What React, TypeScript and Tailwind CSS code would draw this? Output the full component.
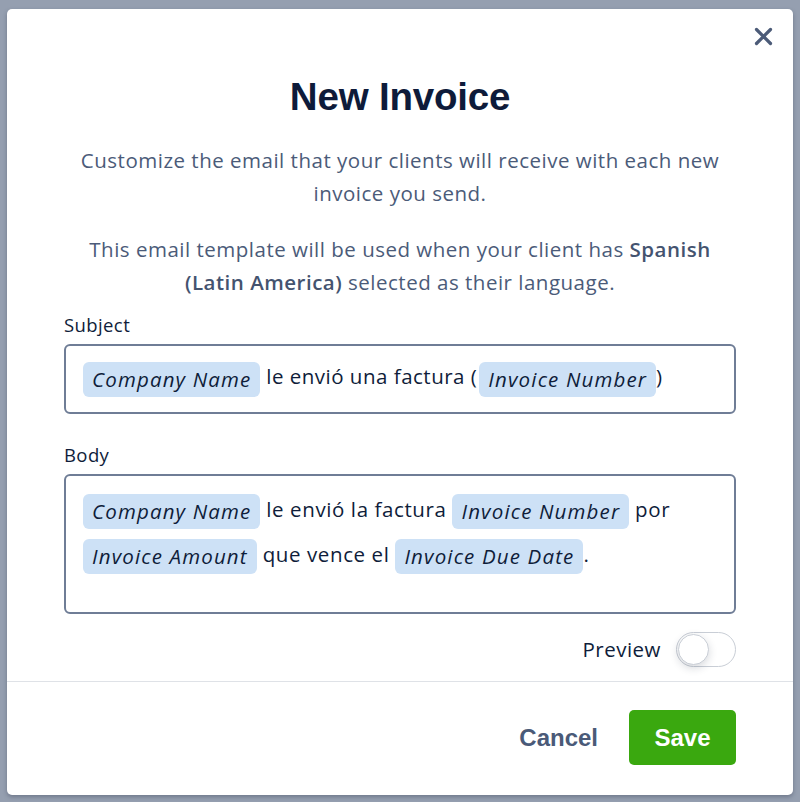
import { useState } from "react";

const body = { fontFamily: '"Open Sans", "Noto Sans", sans-serif' };
const heading = { fontFamily: '"Liberation Sans", Arial, sans-serif' };

function Token({ label }: { label: string }) {
  return (
    <span className="inline-block h-[35px] rounded-[6px] bg-[#cde1f6] px-[9px] align-middle italic leading-[35px] tracking-[1.15px] text-[#0f1d3a]">
      {label}
    </span>
  );
}

function Toggle({ on, onChange }: { on: boolean; onChange: () => void }) {
  return (
    <button
      type="button"
      onClick={onChange}
      className={`relative h-[35px] w-[60px] rounded-full border border-[#c9ced6] transition-colors ${
        on ? "bg-[#3aa50f]" : "bg-white"
      }`}
    >
      <span
        className={`absolute top-[1px] h-[31px] w-[31px] rounded-full border border-[#c9ced6] bg-white shadow-[0_3px_8px_rgba(30,40,60,0.18)] transition-all ${
          on ? "left-[26px]" : "left-[1px]"
        }`}
      />
    </button>
  );
}

export default function App() {
  const [preview, setPreview] = useState(false);

  return (
    <div className="h-[802px] w-[800px] overflow-hidden bg-[#959fb0] pl-[7px] pt-[9px]" style={body}>
      <div className="relative w-[786px] rounded-[5px] bg-white shadow-[0_2px_4px_rgba(40,50,70,0.35)]">
        <button type="button" className="absolute right-[16px] top-[14px] p-1 text-[#4c5b78]">
          <svg width="19" height="19" viewBox="0 0 19 19">
            <path d="M2.5 2.5 L16.5 16.5 M16.5 2.5 L2.5 16.5" stroke="currentColor" strokeWidth="3.2" strokeLinecap="round" />
          </svg>
        </button>

        <div className="px-[57px] pt-[66px]">
          <h1 className="text-center text-[38.5px] font-bold leading-[44px] tracking-[-0.2px] text-[#0e1b3a]" style={heading}>
            New Invoice
          </h1>

          <p className="mt-[25px] text-center text-[20.5px] leading-[33px] tracking-[0.5px] text-[#4b5b79]">
            Customize the email that your clients will receive with each new
            <br />
            invoice you send.
          </p>
          <p className="mt-[23px] text-center text-[20.5px] leading-[33px] tracking-[0.5px] text-[#4b5b79]">
            This email template will be used when your client has <span className="font-semibold text-[#44536f]">Spanish</span>
            <br />
            <span className="font-semibold text-[#44536f]">(Latin America)</span> selected as their language.
          </p>

          <label className="mt-[14px] block text-[18.5px] leading-[24px] tracking-[0.4px] text-[#0f1d3a]">Subject</label>
          <div className="mt-[7px] flex h-[70px] items-center rounded-[6px] border-2 border-[#6f7d96] px-[17px] text-[20.5px] tracking-[0.5px] text-[#0f1d3a]">
            <div className="whitespace-nowrap">
              <Token label="Company Name" /> le envió una factura (<span className="ml-[2px]" />
              <Token label="Invoice Number" />)
            </div>
          </div>

          <label className="mt-[29px] block text-[18.5px] leading-[24px] tracking-[0.4px] text-[#0f1d3a]">Body</label>
          <div className="mt-[7px] h-[140px] rounded-[6px] border-2 border-[#6f7d96] px-[17px] pt-[11px] text-[20.5px] leading-[45px] tracking-[0.6px] text-[#0f1d3a]">
            <div className="whitespace-nowrap">
              <Token label="Company Name" /> le envió la factura <Token label="Invoice Number" /> por
            </div>
            <div className="whitespace-nowrap">
              <Token label="Invoice Amount" /> que vence el <Token label="Invoice Due Date" />.
            </div>
          </div>

          <div className="mt-[18px] flex items-center justify-end gap-[15px]">
            <span className="text-[20.5px] tracking-[0.5px] text-[#0f1d3a]">Preview</span>
            <Toggle on={preview} onChange={() => setPreview(!preview)} />
          </div>
        </div>

        <div className="mt-[14px] border-t border-[#dfe2e7]" />

        <div className="flex items-center justify-end gap-[31px] px-[57px] pb-[30px] pt-[28px]" style={heading}>
          <button type="button" className="text-[24px] font-bold text-[#4a5a78]">
            Cancel
          </button>
          <button
            type="button"
            className="h-[55px] w-[107px] rounded-[5px] bg-[#3aa80f] text-[24px] font-bold text-white"
          >
            Save
          </button>
        </div>
      </div>
    </div>
  );
}
